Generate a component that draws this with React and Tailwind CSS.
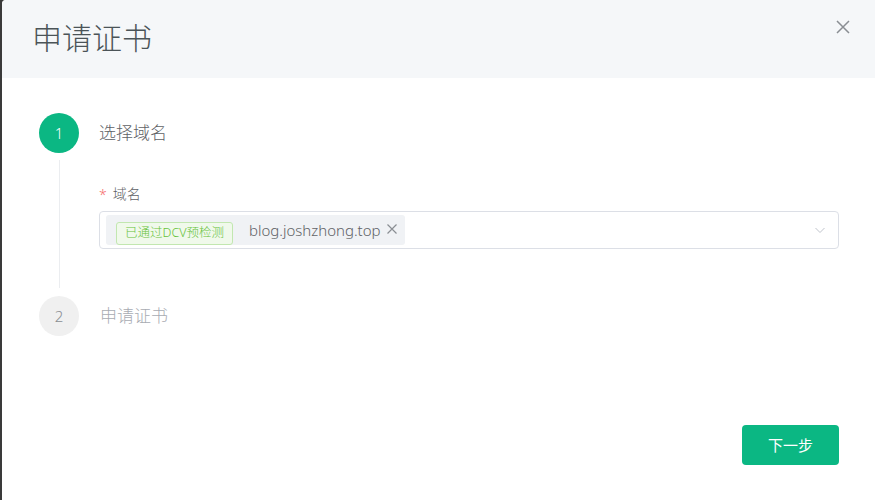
import React from "react";

const font = { fontFamily: '"Noto Sans", "Noto Sans CJK SC", sans-serif' };

export default function App() {
  return (
    <div className="w-[875px] h-[500px] flex bg-[#3a3a3a] overflow-hidden font-light" style={font}>
      <div className="w-[2px] shrink-0" />
      <div className="flex-1 flex flex-col bg-white rounded-tl-[4px] overflow-hidden">
        <div className="h-[78px] shrink-0 bg-[#f5f7f9] flex items-center justify-between pl-[30px] pr-[24px]">
          <span className="text-[30px] leading-none text-[#4b5458] -mt-[2px]">申请证书</span>
          <svg width="16" height="16" viewBox="0 0 16 16" className="-mt-[24px]">
            <path d="M2 2 L14 14 M14 2 L2 14" stroke="#8a8e93" strokeWidth="1.5" fill="none" />
          </svg>
        </div>
        <div className="flex-1 flex flex-col pl-[37px] pr-[36px] pt-[35px]">
          <div className="flex">
            <div className="w-[40px] flex flex-col items-center shrink-0">
              <div className="w-[40px] h-[40px] rounded-full bg-[#0bb783] text-white text-[15px] flex items-center justify-center">1</div>
              <div className="w-px flex-1 bg-[#ebedf0] mt-[7px] mb-[8px]" />
            </div>
            <div className="flex-1 ml-[20px] pb-[47px]">
              <div className="h-[40px] flex items-center text-[17px] text-[#606266]">选择域名</div>
              <div className="mt-[30px] h-[20px] flex items-center text-[14px] text-[#606266]">
                <span className="text-[#f56c6c] mr-[6px] mt-[2px]">*</span>域名
              </div>
              <div className="mt-[8px] h-[38px] border border-[#dcdfe6] rounded-[4px] flex items-center pl-[6px] pr-[12px]">
                <div className="h-[30px] bg-[#f0f2f5] rounded-[3px] flex items-center pl-[10px] pr-[7px]">
                  <span className="h-[23px] mt-[6px] px-[8px] border border-[#c2e7b0] bg-[#f0f9eb] text-[#67c23a] text-[12.5px] rounded-[3px] flex items-center">已通过DCV预检测</span>
                  <span className="ml-[16px] text-[15px] text-[#606266]">blog.joshzhong.top</span>
                  <svg width="12" height="12" viewBox="0 0 12 12" className="ml-[5px] -mt-[2px]">
                    <path d="M1.5 1.5 L10.5 10.5 M10.5 1.5 L1.5 10.5" stroke="#8a8e93" strokeWidth="1.2" fill="none" />
                  </svg>
                </div>
                <div className="flex-1" />
                <svg width="12" height="12" viewBox="0 0 12 12">
                  <path d="M1.5 4 L6 8.5 L10.5 4" stroke="#c0c4cc" strokeWidth="1" fill="none" />
                </svg>
              </div>
            </div>
          </div>
          <div className="flex items-center">
            <div className="w-[40px] h-[40px] rounded-full bg-[#f0f0f0] text-[#8a8e93] text-[15px] flex items-center justify-center shrink-0">2</div>
            <div className="ml-[21px] text-[17px] text-[#a8abb2]">申请证书</div>
          </div>
          <div className="flex-1" />
          <div className="flex justify-end pb-[35px]">
            <button className="w-[97px] h-[40px] rounded-[4px] bg-[#0bb783] text-white text-[15px] font-normal">下一步</button>
          </div>
        </div>
      </div>
    </div>
  );
}
